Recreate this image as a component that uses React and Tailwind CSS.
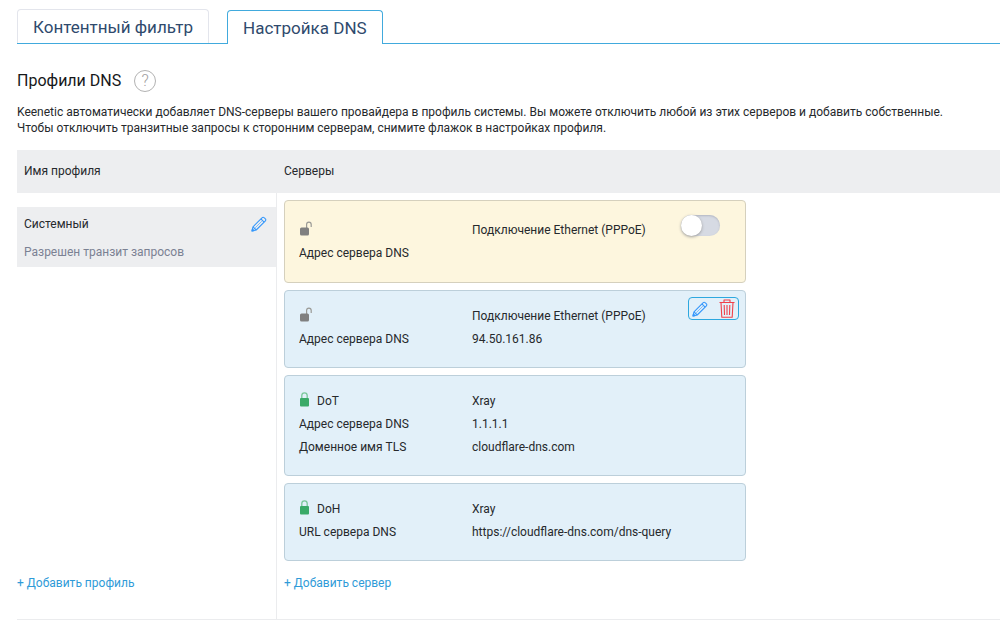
import { useState } from "react";
import clsx from "clsx";

const SERVERS = [
  {
    id: "pppoe-auto",
    secure: false,
    kind: "",
    connection: "Подключение Ethernet (PPPoE)",
    rows: [["Адрес сервера DNS", ""]],
    control: "switch",
  },
  {
    id: "pppoe-custom",
    secure: false,
    kind: "",
    connection: "Подключение Ethernet (PPPoE)",
    rows: [["Адрес сервера DNS", "94.50.161.86"]],
    control: "actions",
  },
  {
    id: "dot",
    secure: true,
    kind: "DoT",
    connection: "Xray",
    rows: [
      ["Адрес сервера DNS", "1.1.1.1"],
      ["Доменное имя TLS", "cloudflare-dns.com"],
    ],
  },
  {
    id: "doh",
    secure: true,
    kind: "DoH",
    connection: "Xray",
    rows: [["URL сервера DNS", "https://cloudflare-dns.com/dns-query"]],
  },
];

const PencilIcon = () => (
  <svg viewBox="0 0 16 16" className="h-4 w-4" fill="none" stroke="#3597fb" strokeWidth="1.1" strokeLinejoin="round">
    <path d="M1 15l1-4.2L11.2 1.6a1.3 1.3 0 0 1 1.9 0l1.3 1.3a1.3 1.3 0 0 1 0 1.9L5.2 14z" />
    <path d="M2 10.8L5.2 14M9.9 2.9l3.2 3.2" />
    <path d="M4.2 11.8l6.6-6.6" strokeWidth=".6" />
    <path d="M1 15l.4-2 1.6 1.6z" fill="#3597fb" />
  </svg>
);

const TrashIcon = () => (
  <svg viewBox="0 0 16 19" className="h-[19px] w-4" fill="none" stroke="#f0404a" strokeWidth="1.1" strokeLinejoin="round">
    <path d="M.5 3.5h15M5 3.5V1h6v2.5M2 3.5l.8 14.8h10.4L14 3.5" />
    <path d="M5.2 6l.3 10M8 6v10M10.8 6l-.3 10" />
  </svg>
);

const LockIcon = ({ secure }) =>
  secure ? (
    <svg viewBox="0 0 12 15" className="mb-[5px] h-[15px] w-3" fill="none">
      <path d="M2.8 7V3.6a2.7 2.7 0 0 1 5.4 0V7" stroke="#79c79a" strokeWidth="1.3" />
      <rect x="1" y="6" width="9" height="8.5" rx="1" fill="#3aaa68" />
    </svg>
  ) : (
    <svg viewBox="0 0 13 15" className="mb-[5px] h-[15px] w-[13px]" fill="none">
      <path d="M7.6 7V3.4a2.3 2.3 0 0 1 4.6 0V6" stroke="#9a9a96" strokeWidth="1.2" />
      <rect x="1" y="6.5" width="9" height="8" rx="1.5" fill="#808080" />
    </svg>
  );

const ServerCard = ({ server }) => {
  const [enabled, setEnabled] = useState(false);
  const isSwitch = server.control === "switch";

  return (
    <li
      className={clsx(
        "relative rounded border px-3.5",
        isSwitch
          ? "border-[#d5d0bd] bg-[#fdf6de] pt-[18px] pb-[17px]"
          : "border-[#bccfda] bg-[#e2f0f9] pt-3.5 pb-4"
      )}
    >
      <div className="grid grid-cols-[173px_1fr] leading-[23px]">
        <span className="flex items-center gap-1.5">
          <LockIcon secure={server.secure} />
          {server.kind}
        </span>
        {isSwitch ? (
          <label htmlFor={server.id}>{server.connection}</label>
        ) : (
          <span>{server.connection}</span>
        )}
        {server.rows.map(([label, value]) => (
          <div key={label} className="col-span-2 grid grid-cols-subgrid">
            <span>{label}</span>
            <span>{value}</span>
          </div>
        ))}
      </div>

      {isSwitch && (
        <span className="absolute top-3.5 right-[25px] flex h-[21px] w-[39px] items-center">
          <input
            id={server.id}
            type="checkbox"
            role="switch"
            checked={enabled}
            onChange={() => setEnabled(!enabled)}
            className="peer h-full w-full cursor-pointer appearance-none rounded-full bg-[#d6dae3] shadow-[inset_0_1px_2px_#b4b8c2] checked:bg-[#3daee3]"
          />
          <span className="pointer-events-none absolute left-0 h-[21px] w-[21px] rounded-full bg-white shadow-[0_1px_3px_#999] peer-checked:left-[18px]" />
        </span>
      )}

      {server.control === "actions" && (
        <div className="absolute top-1.5 right-1.5 flex h-[23px] items-center gap-[11px] rounded border border-[#2da8df] px-[3px]">
          <button type="button" aria-label="Изменить" className="cursor-pointer">
            <PencilIcon />
          </button>
          <button type="button" aria-label="Удалить" className="cursor-pointer">
            <TrashIcon />
          </button>
        </div>
      )}
    </li>
  );
};

const App = () => {
  return (
    <main className="pl-[17px] font-[Roboto,sans-serif] text-xs text-[#26292c]">
      <nav className="flex items-end gap-[18px] border-b border-[#41aadd] pt-[9px] text-[17px] text-[#2f4a6d]">
        <a
          href="#filter"
          className="rounded-t border border-b-0 border-[#e3e5ec] px-[15px] pt-1 pb-[3px] leading-[26px]"
        >
          Контентный фильтр
        </a>
        <a
          href="#dns"
          aria-current="page"
          className="-mb-px rounded-t border border-b-0 border-[#41aadd] bg-white px-[15px] pt-1 pb-[3px] leading-[26px]"
        >
          Настройка DNS
        </a>
      </nav>

      <div className="mt-[25px] flex items-center gap-[13px]">
        <h1 className="text-base text-[#16181a]">Профили DNS</h1>
        <button
          type="button"
          className="flex h-[22px] w-[22px] items-center justify-center rounded-full border border-[#b2b2b2] text-base font-light text-[#a0a0a0]"
        >
          ?
        </button>
      </div>

      <p className="mt-[11px] pr-10 leading-4">
        Keenetic автоматически добавляет DNS-серверы вашего провайдера в профиль системы. Вы можете отключить
        любой из этих серверов и добавить собственные.
        <br />
        Чтобы отключить транзитные запросы к сторонним серверам, снимите флажок в настройках профиля.
      </p>

      <section className="mt-3.5 border-b border-[#ebecee]">
        <div className="grid grid-cols-[260px_1fr] bg-[#edeef0] leading-[43px]">
          <h2 className="px-[7px]">Имя профиля</h2>
          <h2 className="px-[7px]">Серверы</h2>
        </div>

        <div className="grid grid-cols-[260px_1fr]">
          <div className="flex flex-col justify-between border-r border-[#ebecee] pt-3.5 pb-[26px]">
            <div className="bg-[#edeef0] px-[7px] pt-[7px] pb-[5px]">
              <div className="flex items-center justify-between pr-0.5">
                <h3 className="leading-5">Системный</h3>
                <button type="button" aria-label="Изменить" className="cursor-pointer">
                  <PencilIcon />
                </button>
              </div>
              <p className="mt-2 leading-5 text-[#7b8193]">Разрешен транзит запросов</p>
            </div>
            <button type="button" className="cursor-pointer self-start leading-5 text-[#2f9bd8]">
              + Добавить профиль
            </button>
          </div>

          <div className="px-[7px] pt-[7px] pb-[26px]">
            <ul className="flex max-w-[462px] flex-col gap-[7px]">
              {SERVERS.map((server) => (
                <ServerCard key={server.id} server={server} />
              ))}
            </ul>
            <button type="button" className="mt-3 cursor-pointer leading-5 text-[#2f9bd8]">
              + Добавить сервер
            </button>
          </div>
        </div>
      </section>
    </main>
  );
};

export default App;
